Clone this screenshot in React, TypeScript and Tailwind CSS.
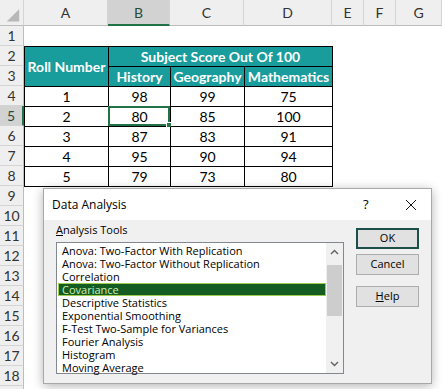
import React from 'react';

const colHeads: [string, string][] = [
  ['', 'w-[24px]'], ['A', 'w-[84px]'], ['B', 'w-[62px]'], ['C', 'w-[74px]'],
  ['D', 'w-[88px]'], ['E', 'w-[32px]'], ['F', 'w-[32px]'], ['G', 'w-[46px]'],
];

const scores = [
  [1, 98, 99, 75],
  [2, 80, 85, 100],
  [3, 87, 83, 91],
  [4, 95, 90, 94],
  [5, 79, 73, 80],
];

const tools = [
  'Anova: Two-Factor With Replication',
  'Anova: Two-Factor Without Replication',
  'Correlation',
  'Covariance',
  'Descriptive Statistics',
  'Exponential Smoothing',
  'F-Test Two-Sample for Variances',
  'Fourier Analysis',
  'Histogram',
  'Moving Average',
];

function Chevron({ up }: { up?: boolean }) {
  return (
    <svg width="9" height="6" viewBox="0 0 9 6" className="block">
      <polyline points={up ? '1,5 4.5,1.5 8,5' : '1,1 4.5,4.5 8,1'} fill="none" stroke="#606060" strokeWidth="1.4" />
    </svg>
  );
}

function Dialog() {
  return (
    <div className="absolute left-[43px] top-[188px] w-[389px] h-[196px] border border-[#a8a8a8] shadow-[0_2px_10px_rgba(0,0,0,0.3)] flex flex-col font-['Open_Sans',sans-serif] text-[11px] text-black">
      <div className="h-[31px] bg-white flex items-center pl-[8px] pr-[14px]">
        <span className="text-[12px] flex-1">Data Analysis</span>
        <span className="text-[13px] w-[12px] mr-[30px]">?</span>
        <svg width="12" height="12" viewBox="0 0 12 12">
          <path d="M1 1 L11 11 M11 1 L1 11" stroke="#111" strokeWidth="1" />
        </svg>
      </div>
      <div className="flex-1 bg-[#f0f0f0] flex pl-[12px] gap-[12px]">
        <div className="pt-[2px]">
          <div className="h-[16px] leading-[16px]"><span className="underline">A</span>nalysis Tools</div>
          <div className="mt-[4px] w-[288px] h-[132px] bg-white border border-[#828790] flex">
            <div className="flex-1 pt-[1px] pl-[1px]">
              {tools.map(t => (
                <div key={t}
                  className={t === 'Covariance'
                    ? 'h-[13px] leading-[11px] pl-[3px] bg-[#155c22] border border-[#9ccc4c] text-[#cfeeb5] whitespace-nowrap'
                    : 'h-[13px] leading-[13px] pl-[4px] whitespace-nowrap'}>
                  {t}
                </div>
              ))}
            </div>
            <div className="w-[17px] bg-[#f0f0f0] flex flex-col items-center">
              <div className="h-[18px] flex items-center"><Chevron up /></div>
              <div className="w-[15px] h-[51px] mt-[4px] bg-[#cdcdcd]" />
              <div className="flex-1" />
              <div className="h-[18px] flex items-center"><Chevron /></div>
            </div>
          </div>
        </div>
        <div className="pt-[8px] flex flex-col">
          <div className="w-[63px] h-[21px] border-2 border-[#1c4f4a] bg-[#e1e1e1] flex items-center justify-center">OK</div>
          <div className="mt-[5px] w-[63px] h-[21px] border border-[#adadad] bg-[#e1e1e1] flex items-center justify-center">Cancel</div>
          <div className="mt-[11px] w-[63px] h-[21px] border border-[#adadad] bg-[#e1e1e1] flex items-center justify-center"><span className="underline">H</span>elp</div>
        </div>
      </div>
    </div>
  );
}

export default function App() {
  const rows = Array.from({ length: 19 }, (_, i) => i + 1);
  return (
    <div className="relative w-[442px] h-[389px] overflow-hidden bg-white font-['Lato',sans-serif] text-[14px] text-black">
      {/* column headers */}
      <div className="flex h-[26px] bg-[#efefef] text-[#333]">
        {colHeads.map(([c, w], i) => (
          <div key={i}
            className={`${w} h-full flex items-center justify-center border-r border-[#d4d4d4] ${c === 'B' ? 'bg-[#d2d2d2] border-b-2 border-b-[#217346] text-[#2b4a36]' : 'border-b border-b-[#bdbdbd]'}`}>
            {i === 0 ? (
              <svg width="24" height="26" viewBox="0 0 24 26">
                <polygon points="20,9 20,22 7,22" fill="#b8b8b8" />
              </svg>
            ) : c}
          </div>
        ))}
      </div>

      <div className="flex">
        {/* row headers */}
        <div className="w-[24px] bg-[#efefef] text-[#333]">
          {rows.map(r => (
            <div key={r}
              className={`h-[20px] flex items-center justify-center border-b border-[#d4d4d4] ${r === 5 ? 'bg-[#d2d2d2] border-r-2 border-r-[#217346] text-[#2b4a36]' : 'border-r border-r-[#bdbdbd]'}`}>
              {r}
            </div>
          ))}
        </div>

        {/* table */}
        <div className="pt-[20px]">
          <div className="grid grid-cols-[84px_62px_74px_88px] auto-rows-[20px] border-t border-l border-black">
            <div className="row-span-2 bg-[#189c9c] text-white font-bold flex items-center justify-center border-r border-b border-black">Roll Number</div>
            <div className="col-span-3 bg-[#189c9c] text-white font-bold flex items-center justify-center border-r border-b border-black">Subject Score Out Of 100</div>
            {['History', 'Geography', 'Mathematics'].map(h => (
              <div key={h} className="bg-[#189c9c] text-white font-bold flex items-center justify-center border-r border-b border-black">{h}</div>
            ))}
            {scores.map((row, ri) =>
              row.map((v, ci) => (
                <div key={`${ri}-${ci}`} className="relative flex items-center justify-center border-r border-b border-black">
                  {v}
                  {ri === 1 && ci === 1 && (
                    <div className="absolute -left-[1px] -top-[1px] -right-[0px] -bottom-[0px] border-2 border-[#217346]">
                      <div className="absolute -right-[4px] -bottom-[4px] w-[6px] h-[6px] bg-[#217346] border border-white" />
                    </div>
                  )}
                </div>
              ))
            )}
          </div>
        </div>
      </div>

      <Dialog />
    </div>
  );
}
